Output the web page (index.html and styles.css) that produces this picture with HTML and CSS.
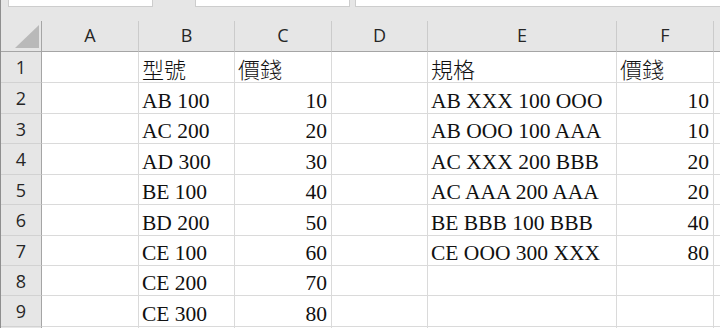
FILE: index.html
```html
<!DOCTYPE html>
<html lang="zh-Hant">
<head>
<meta charset="utf-8">
<title>Sheet</title>
<link rel="stylesheet" href="styles.css">
</head>
<body>
<div class="app">
  <div class="topbar">
    <div class="box box1"></div>
    <div class="box box2"></div>
    <div class="box box3"></div>
  </div>
  <div class="spacer"></div>
  <div class="sheet">
    <div class="ch corner"><svg class="tri" width="25" height="24" viewBox="0 0 25 24"><polygon points="24,0 24,23 0,23" fill="#b9b9b9"/></svg></div>
    <div class="ch">A</div><div class="ch">B</div><div class="ch">C</div><div class="ch">D</div><div class="ch">E</div><div class="ch">F</div><div class="ch last"></div>

    <div class="rh r31">1</div><div class="c"></div><div class="c cjk">型號</div><div class="c cjk">價錢</div><div class="c"></div><div class="c cjk">規格</div><div class="c cjk">價錢</div><div class="c last"></div>
    <div class="rh r31">2</div><div class="c"></div><div class="c">AB 100</div><div class="c n">10</div><div class="c"></div><div class="c">AB XXX 100 OOO</div><div class="c n">10</div><div class="c last"></div>
    <div class="rh r30">3</div><div class="c"></div><div class="c">AC 200</div><div class="c n">20</div><div class="c"></div><div class="c">AB OOO 100 AAA</div><div class="c n">10</div><div class="c last"></div>
    <div class="rh r31">4</div><div class="c"></div><div class="c">AD 300</div><div class="c n">30</div><div class="c"></div><div class="c">AC XXX 200 BBB</div><div class="c n">20</div><div class="c last"></div>
    <div class="rh r30">5</div><div class="c"></div><div class="c">BE 100</div><div class="c n">40</div><div class="c"></div><div class="c">AC AAA 200 AAA</div><div class="c n">20</div><div class="c last"></div>
    <div class="rh r31">6</div><div class="c"></div><div class="c">BD 200</div><div class="c n">50</div><div class="c"></div><div class="c">BE BBB 100 BBB</div><div class="c n">40</div><div class="c last"></div>
    <div class="rh r30">7</div><div class="c"></div><div class="c">CE 100</div><div class="c n">60</div><div class="c"></div><div class="c">CE OOO 300 XXX</div><div class="c n">80</div><div class="c last"></div>
    <div class="rh r30">8</div><div class="c"></div><div class="c">CE 200</div><div class="c n">70</div><div class="c"></div><div class="c"></div><div class="c"></div><div class="c last"></div>
    <div class="rh r31">9</div><div class="c"></div><div class="c">CE 300</div><div class="c n">80</div><div class="c"></div><div class="c"></div><div class="c"></div><div class="c last"></div>
    <div class="rh r31"></div><div class="c"></div><div class="c"></div><div class="c"></div><div class="c"></div><div class="c"></div><div class="c"></div><div class="c last"></div>
  </div>
</div>
</body>
</html>
```
FILE: styles.css
```css
html, body {
  margin: 0;
  padding: 0;
  background: #ffffff;
  overflow: hidden;
}
.app {
  width: 720px;
  height: 328px;
  overflow: hidden;
  border-left: 1px solid #8f8f8f;
  box-sizing: border-box;
  background: #e6e6e6;
}
.topbar {
  height: 7px;
  display: flex;
  padding-left: 7px;
  box-sizing: border-box;
}
.box {
  height: 7px;
  box-sizing: border-box;
  background: #ffffff;
  border: 1px solid #cdcdcd;
  border-top: none;
}
.box1 { width: 145px; }
.box2 { width: 155px; margin-left: 42px; }
.box3 { flex: 1; margin-left: 5px; border-right: none; }
.spacer { height: 14px; }
.sheet {
  display: grid;
  grid-template-columns: 41px 97px 96px 97px 96px 189px 97px 1fr;
  grid-template-rows: 31px 31px 31px 30px 31px 30px 31px 30px 30px 31px 31px;
  background: #ffffff;
}
.ch {
  background: #e6e6e6;
  border-right: 1px solid #cbcbcb;
  border-bottom: 1px solid #a5a5a5;
  box-sizing: border-box;
  display: flex;
  align-items: center;
  justify-content: center;
  font-family: "Open Sans", "Noto Sans", sans-serif;
  font-size: 18px;
  color: #262626;
  padding-bottom: 3px;
}
.ch.last { border-right: none; }
.corner {
  border-right: 1px solid #a5a5a5;
  justify-content: flex-end;
  align-items: flex-end;
  padding: 0 1px 2px 0;
}
.tri { display: block; }
.rh {
  background: #e6e6e6;
  border-right: 1px solid #a5a5a5;
  border-bottom: 1px solid #d2d2d2;
  box-sizing: border-box;
  display: flex;
  align-items: center;
  justify-content: center;
  font-family: "Open Sans", "Noto Sans", sans-serif;
  font-size: 18px;
  color: #262626;
}
.c {
  border-right: 1px solid #dadada;
  border-bottom: 1px solid #dadada;
  box-sizing: border-box;
  display: flex;
  align-items: flex-end;
  padding: 0 4px 0 3px;
  font-family: "Liberation Serif", "Noto Sans CJK TC", serif;
  font-size: 21.5px;
  line-height: 24px;
  color: #111111;
  white-space: nowrap;
}
.c.last { border-right: none; }
.c.n { justify-content: flex-end; }
.c.cjk {
  font-family: "Noto Sans CJK TC", sans-serif;
  font-size: 22px;
  font-weight: 300;
  line-height: 28px;
  padding-bottom: 0;
}
```
